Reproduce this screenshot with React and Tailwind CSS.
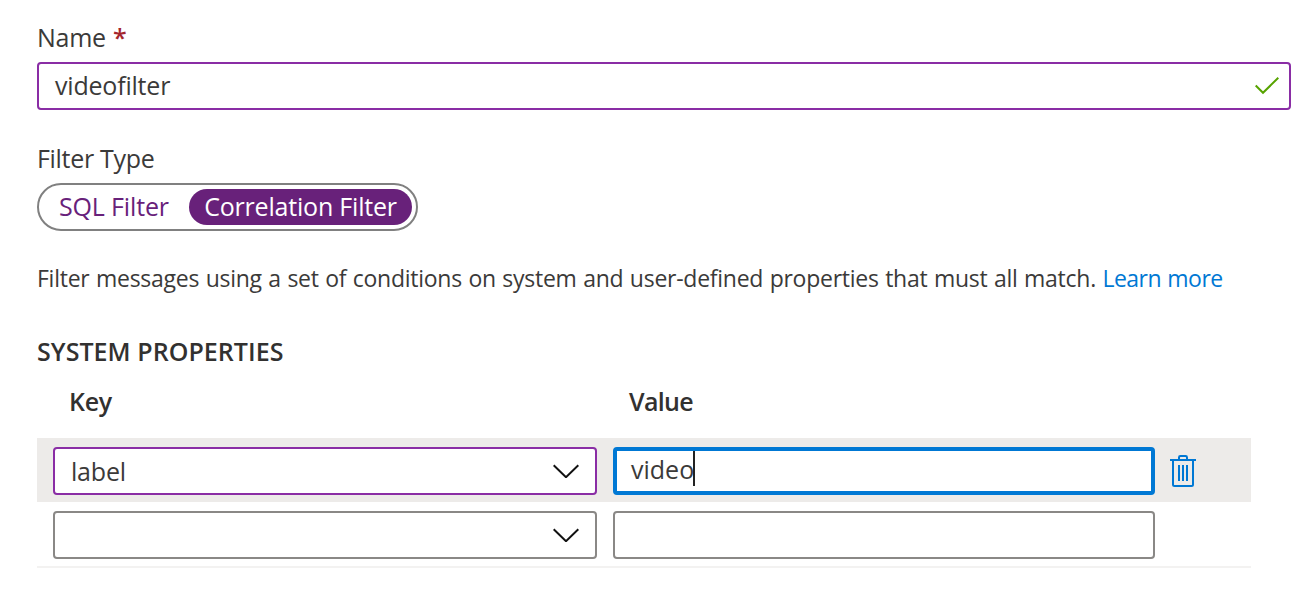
function Chevron() {
  return (
    <svg className="h-[14px] w-[26px] shrink-0" viewBox="0 0 26 14" fill="none" stroke="#111" strokeWidth="2">
      <path d="M0.7 1.2 L13 13.2 L25.3 1.2" />
    </svg>
  );
}

function Trash() {
  return (
    <svg className="h-[32px] w-[26px] shrink-0" viewBox="0 0 26 32" fill="none" stroke="#0078d4" strokeWidth="2">
      <path d="M0 5H26M9 5V2.4Q9 1 10.4 1H15.6Q17 1 17 2.4V5" />
      <path d="M3 5V29.5Q3 31 4.5 31H21.5Q23 31 23 29.5V5M9 10V26M13 10V26M17 10V26" />
    </svg>
  );
}

function Select({ value, active }) {
  return (
    <div className={`flex h-12 w-[544px] items-center justify-between rounded-[4px] border-2 bg-white pr-[16px] pl-[16px] ${active ? "border-[#8a2da5]" : "border-[#8a8886]"}`}>
      <span className="h-[30px] tracking-[-0.2px]">{value}</span>
      <Chevron />
    </div>
  );
}

export default function App() {
  return (
    <main className="h-[592px] w-[1312px] overflow-hidden bg-white pt-[22px] pr-[21px] pl-[37px] font-['Open_Sans',sans-serif] text-[25px] leading-[30px] whitespace-nowrap text-[#3b3a39]">
      <div className="flex h-[30px] gap-[7px]">
        <span className="tracking-[-0.25px]">Name</span>
        <span className="font-semibold text-[#a4262c]">*</span>
      </div>
      <div className="mt-[10px] flex h-12 items-center justify-between rounded-[4px] border-2 border-[#8a2da5] pr-[10px] pl-[16px]">
        <span className="h-[32px] tracking-[-0.2px]">videofilter</span>
        <svg className="h-[18px] w-[24px]" viewBox="0 0 24 18" fill="none" stroke="#57a300" strokeWidth="2">
          <path d="M0.7 8.5 L8 15.8 L23.3 0.8" />
        </svg>
      </div>

      <div className="mt-[33px] h-[30px] tracking-[-0.3px]">Filter Type</div>
      <div className="mt-[10px] flex h-12 w-[381px] items-center rounded-full border-2 border-[#808080] pl-[20px] text-[#68217a]">
        <span className="h-8 w-[130px] tracking-[-0.15px]">SQL Filter</span>
        <span className="flex h-9 w-[223px] items-center justify-center rounded-full bg-[#68217a] text-white">
          <span className="h-8 font-medium tracking-[-0.2px]">Correlation Filter</span>
        </span>
      </div>

      <p className="mt-[31px] h-[30px] pt-px text-[23px] tracking-[-0.26px] [word-spacing:0.8px]">
        <span>Filter messages using a set of conditions on system and user-defined properties that must all match.</span>{" "}
        <a className="tracking-[-0.52px] text-[#0078d4]">Learn more</a>
      </p>

      <h2 className="mt-[44px] h-[30px] font-semibold tracking-[0.05px] text-[#323130]">SYSTEM PROPERTIES</h2>
      <div className="mt-[20px] flex h-[30px] pl-[32px] font-semibold text-[#323130]">
        <span className="w-[560px] tracking-[-0.3px]">Key</span>
        <span className="tracking-[-0.7px]">Value</span>
      </div>

      <div className="mt-[22px] w-[1214px] border-b-2 border-[#f3f2f1]">
        <div className="flex h-16 gap-4 bg-[#edebe9] pt-[9px] pb-[7px] pl-4">
          <Select value="label" active />
          <div className="flex h-12 w-[542px] items-center rounded-[4px] border-4 border-[#0078d4] bg-white pl-[14px]">
            <span className="h-[34px]">video</span>
            <span className="-ml-px mb-[5px] h-[35px] w-[2px] bg-[#222]" />
          </div>
          <div className="-ml-px flex h-12 items-center">
            <Trash />
          </div>
        </div>
        <div className="flex h-16 gap-4 pt-[9px] pb-[7px] pl-4">
          <Select value="" />
          <div className="h-12 w-[542px] rounded-[4px] border-2 border-[#8a8886] bg-white" />
        </div>
      </div>
    </main>
  );
}
